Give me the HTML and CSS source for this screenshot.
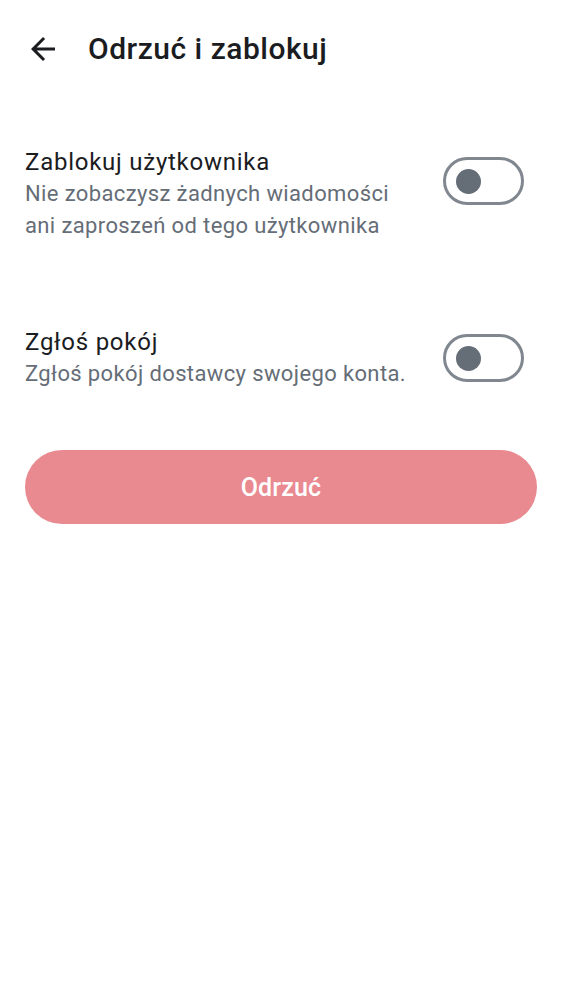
FILE: index.html
```html
<!DOCTYPE html>
<html lang="pl">
<head>
<meta charset="utf-8">
<link rel="stylesheet" href="styles.css">
</head>
<body>
<div class="screen">
  <header class="topbar">
    <button class="back" aria-label="Wstecz">
      <svg viewBox="0 0 24 24" width="36" height="36"><path d="M20 11H7.83l5.59-5.59L12 4l-8 8 8 8 1.41-1.41L7.83 13H20v-2z" fill="#1b1c1f"/></svg>
    </button>
    <h1 class="title">Odrzuć i zablokuj</h1>
  </header>
  <div class="content">
    <div class="row row-first">
      <div class="texts">
        <div class="row-title">Zablokuj użytkownika</div>
        <div class="row-sub">Nie zobaczysz żadnych wiadomości ani zaproszeń od tego użytkownika</div>
      </div>
      <div class="switch switch-top"><span class="thumb"></span></div>
    </div>
    <div class="row row-second">
      <div class="texts">
        <div class="row-title">Zgłoś pokój</div>
        <div class="row-sub">Zgłoś pokój dostawcy swojego konta.</div>
      </div>
      <div class="switch"><span class="thumb"></span></div>
    </div>
    <button class="primary">Odrzuć</button>
  </div>
</div>
</body>
</html>
```
FILE: styles.css
```css
* { box-sizing: border-box; }
html, body { margin: 0; padding: 0; background: #fff; }
body { font-family: Roboto, "Noto Sans", sans-serif; color: #1b1c1f; }
.screen { width: 562px; min-height: 1000px; }
.topbar { height: 98px; display: flex; align-items: center; padding-left: 25px; }
.back { width: 36px; height: 36px; padding: 0; border: 0; background: none; display: flex; margin-right: 27px; }
.title { margin: 0; font-size: 30px; font-weight: 500; letter-spacing: 0.5px; line-height: 36px; color: #1b1c1f; }
.content { padding: 0 25px; }
.row { display: flex; align-items: center; justify-content: space-between; }
.row-first { margin-top: 48px; }
.row-second { margin-top: 84px; }
.texts { flex: 1; padding-right: 30px; }
.row-title { font-size: 24px; line-height: 32px; letter-spacing: 0.75px; color: #1b1c1f; }
.row-sub { font-size: 22px; line-height: 32px; color: #656d77; letter-spacing: 0.375px; }
.switch { width: 81px; height: 48px; border: 3px solid #80878f; border-radius: 24px; display: flex; align-items: center; padding-left: 10px; flex: none; margin-right: 13px; }
.switch-top { align-self: flex-start; margin-top: 11px; }
.thumb { width: 25px; height: 25px; border-radius: 50%; background: #656d77; }
.primary { margin-top: 60px; width: 512px; height: 74px; border: 0; border-radius: 37px; background: #e98a91; color: #fff; font-family: Roboto, sans-serif; font-size: 25px; font-weight: 500; letter-spacing: 0.15px; display: block; }
```
